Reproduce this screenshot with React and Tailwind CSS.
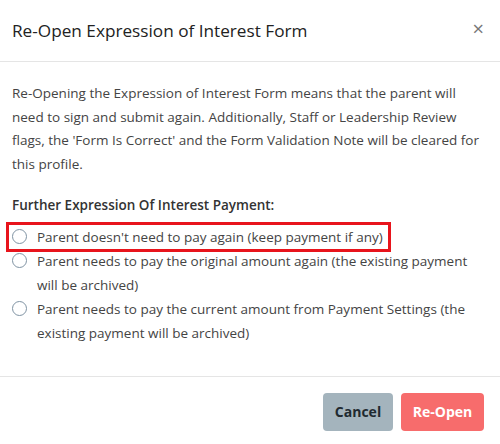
export default function App() {
  const options = [
    "Parent doesn't need to pay again (keep payment if any)",
    "Parent needs to pay the original amount again (the existing payment will be archived)",
    "Parent needs to pay the current amount from Payment Settings (the existing payment will be archived)",
  ];

  return (
    <div className="w-[500px] h-[444px] bg-white text-[#333] font-['Open_Sans',sans-serif] flex flex-col">
      {/* Header */}
      <div className="h-[62px] flex items-center justify-between pl-3 pr-4 border-b border-[#e5e5e5]">
        <h1 className="text-[17.2px] text-[#222]">Re-Open Expression of Interest Form</h1>
        <button className="text-[#777] text-xl leading-none pb-1">×</button>
      </div>

      {/* Body */}
      <div className="flex-1 px-3 pt-[20px] text-[13.5px]">
        <p className="leading-[23.5px] text-[#444]">
          Re-Opening the Expression of Interest Form means that the parent will need to sign and submit again.
          Additionally, Staff or Leadership Review flags, the 'Form Is Correct' and the Form Validation Note will
          be cleared for this profile.
        </p>

        <div className="mt-[19px] font-semibold text-[#333]">Further Expression Of Interest Payment:</div>

        <div className="mt-[10px] text-[#444]">
          {options.map((label, i) => (
            <label
              key={i}
              className={
                i === 0
                  ? "-mx-[6px] -my-[3px] px-[3px] flex items-start gap-[10px] border-[3px] border-[#e8141c] w-[385px] leading-[24px]"
                  : "flex items-start gap-[10px] leading-[24px]"
              }
            >
              <span className="mt-[4px] shrink-0 w-[15px] h-[15px] rounded-full border border-[#7f93a3] bg-white" />
              <span>{label}</span>
            </label>
          ))}
        </div>
      </div>

      {/* Footer */}
      <div className="h-[68px] border-t border-[#e5e5e5] flex items-start justify-end gap-2 pt-4 pr-4">
        <button className="h-[38px] w-[70px] rounded bg-[#a4b4bd] text-[#1f2a30] text-sm font-bold">Cancel</button>
        <button className="h-[38px] w-[83px] rounded bg-[#f76c6c] text-white text-sm font-bold">Re-Open</button>
      </div>
    </div>
  );
}
